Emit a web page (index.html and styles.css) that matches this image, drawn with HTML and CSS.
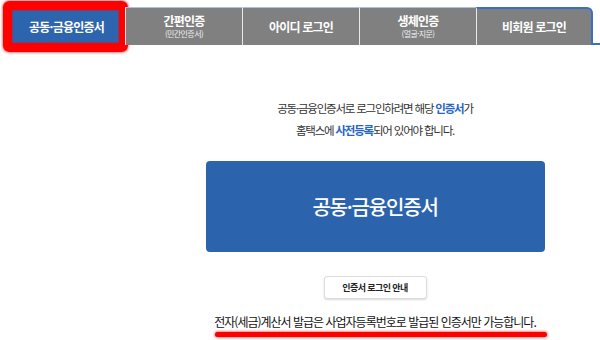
FILE: index.html
```html
<!DOCTYPE html>
<html lang="ko">
<head>
    <meta charset="UTF-8">
    <title>로그인</title>
    <link rel="stylesheet" href="styles.css">
</head>
<body>
<div class="page">
    <ul class="tabs">
        <li class="tab on"><span class="tab-name">공동·금융인증서</span><i class="mark"></i><b class="hilite"></b></li>
        <li class="tab"><span class="tab-name">간편인증</span><small>(민간인증서)</small></li>
        <li class="tab"><span class="tab-name">아이디 로그인</span></li>
        <li class="tab"><span class="tab-name">생체인증</span><small>(얼굴·지문)</small></li>
        <li class="tab last"><span class="tab-name">비회원 로그인</span></li>
        <li class="tab-rest"></li>
    </ul>
    <div class="content">
        <p class="intro">공동·금융인증서로 로그인하려면 해당 <em>인증서</em>가<br>홈택스에 <em>사전등록</em>되어 있어야 합니다.</p>
        <button class="btn-cert">공동·금융인증서</button>
        <button class="btn-guide">인증서 로그인 안내</button>
        <p class="note">전자(세금)계산서 발급은 사업자등록번호로 발급된 인증서만 가능합니다.</p>
        <div class="note-line"></div>
    </div>
</div>
</body>
</html>
```

FILE: styles.css
```css
*{
    margin: 0;
    padding: 0;
    box-sizing: border-box;
}
body{
    background: #fff;
    font-family: "Noto Sans CJK KR", "Noto Sans", sans-serif;
    color: #333;
    overflow: hidden;
}
.page{
    width: 600px;
    height: 340px;
    padding: 7px 0 0 8px;
}
/* 탭 */
.tabs{
    display: flex;
    list-style: none;
    height: 38px;
}
.tab{
    position: relative;
    width: 117px;
    display: flex;
    flex-direction: column;
    align-items: center;
    justify-content: center;
    background: #808080;
    border-top: 1px solid #a8c2e4;
    border-left: 1px solid #e9e9e9;
    color: #fff;
}
.tab-name{
    font-size: 12px;
    font-weight: bold;
    line-height: 14px;
    letter-spacing: -0.8px;
}
.tab small{
    margin-top: 1px;
    font-size: 8px;
    line-height: 10px;
    letter-spacing: -0.6px;
    color: #f0f0f0;
}
.tab.on{
    background: #2d64ae;
    border-left: 0;
}
.tab.last{
    border-right: 2px solid #3b6fc0;
    border-top: 2px solid #3b6fc0;
    border-top-right-radius: 6px;
}
.tab-rest{
    flex: 1;
    border-bottom: 2px solid #3b6fc0;
}
.mark{
    position: absolute;
    left: 56px;
    bottom: -7px;
    border-left: 3px solid transparent;
    border-right: 3px solid transparent;
    border-top: 4px solid #5a4a8a;
}
/* 빨간 강조 표시 */
.hilite{
    position: absolute;
    left: -5px;
    right: -3px;
    top: -7px;
    bottom: -7px;
    border: 9px solid #ff0000;
    border-radius: 6px;
    box-shadow: 0 0 3px #ff0000, inset 0 0 2px #ff0000;
}
/* 본문 */
.content{
    width: 450px;
    margin-left: 142px;
    display: flex;
    flex-direction: column;
    align-items: center;
}
.intro{
    margin-top: 52px;
    font-size: 11.5px;
    line-height: 22px;
    letter-spacing: -1.2px;
    text-align: center;
    color: #333;
}
.intro em{
    font-style: normal;
    font-weight: bold;
    color: #2666c2;
}
.btn-cert{
    margin-top: 20px;
    width: 339px;
    height: 91px;
    border: 0;
    border-radius: 4px;
    background: #2c63ad;
    color: #fff;
    font-family: inherit;
    font-size: 20px;
    font-weight: 500;
    letter-spacing: -1.2px;
}
.btn-guide{
    margin-top: 24px;
    width: 103px;
    height: 23px;
    border: 1px solid #dcdcdc;
    border-radius: 3px;
    background: #fff;
    box-shadow: 0 1px 2px rgba(0,0,0,.15);
    color: #222;
    font-family: inherit;
    font-size: 9px;
    font-weight: bold;
    letter-spacing: -0.6px;
}
.note{
    margin-top: 14px;
    font-size: 12px;
    line-height: 18px;
    color: #111;
    letter-spacing: -1px;
}
.note-line{
    width: 332px;
    height: 5px;
    margin: 1px 0 0 12px;
    background: #ff0000;
    border-radius: 3px;
    box-shadow: 0 0 3px #ff0000;
}
```
